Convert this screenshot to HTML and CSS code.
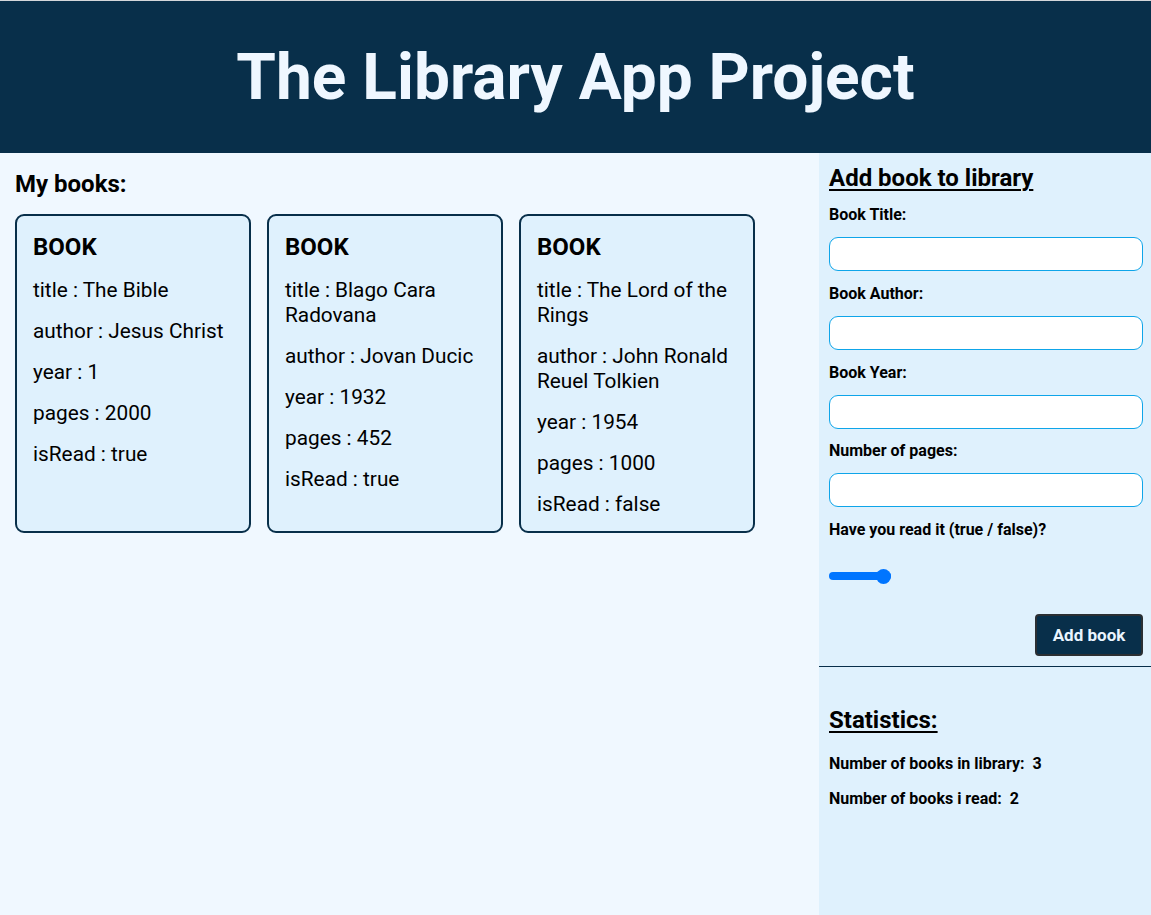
FILE: index.html
```html
<!DOCTYPE html>
<html lang="en">
<head>
<meta charset="utf-8">
<title>The Library App Project</title>
<link rel="stylesheet" href="styles.css">
</head>
<body>
<div class="page">
  <header class="header">
    <h1 class="header-title">The Library App Project</h1>
  </header>
  <div class="content">
    <main class="books">
      <h2 class="books-title">My books:</h2>
      <div class="card-list">
        <div class="card">
          <h3 class="card-title">BOOK</h3>
          <p class="card-row">title : The Bible</p>
          <p class="card-row">author : Jesus Christ</p>
          <p class="card-row">year : 1</p>
          <p class="card-row">pages : 2000</p>
          <p class="card-row">isRead : true</p>
        </div>
        <div class="card">
          <h3 class="card-title">BOOK</h3>
          <p class="card-row">title : Blago Cara Radovana</p>
          <p class="card-row">author : Jovan Ducic</p>
          <p class="card-row">year : 1932</p>
          <p class="card-row">pages : 452</p>
          <p class="card-row">isRead : true</p>
        </div>
        <div class="card">
          <h3 class="card-title">BOOK</h3>
          <p class="card-row">title : The Lord of the Rings</p>
          <p class="card-row">author : John Ronald Reuel Tolkien</p>
          <p class="card-row">year : 1954</p>
          <p class="card-row">pages : 1000</p>
          <p class="card-row">isRead : false</p>
        </div>
      </div>
    </main>
    <aside class="sidebar">
      <form class="add-form">
        <h2 class="side-title">Add book to library</h2>
        <label class="field-label" for="t">Book Title:</label>
        <input class="field-input" id="t" type="text">
        <label class="field-label" for="a">Book Author:</label>
        <input class="field-input" id="a" type="text">
        <label class="field-label" for="y">Book Year:</label>
        <input class="field-input" id="y" type="text">
        <label class="field-label" for="p">Number of pages:</label>
        <input class="field-input" id="p" type="text">
        <label class="field-label" for="r">Have you read it (true / false)?</label>
        <input class="field-range" id="r" type="range" min="0" max="1" value="1">
        <div class="form-actions">
          <button class="add-btn" type="button">Add book</button>
        </div>
      </form>
      <hr class="divider">
      <section class="stats">
        <h2 class="side-title">Statistics:</h2>
        <p class="stat-row">Number of books in library:&nbsp; 3</p>
        <p class="stat-row">Number of books i read:&nbsp; 2</p>
      </section>
    </aside>
  </div>
</div>
</body>
</html>
```
FILE: styles.css
```css
* { box-sizing: border-box; }

html, body {
  margin: 0;
  height: 100%;
}

body {
  font-family: Roboto, "Liberation Sans", sans-serif;
  color: #000;
  background: #f0f8ff;
}

.page {
  display: flex;
  flex-direction: column;
  min-height: 100vh;
  border-top: 1px solid #d4d7da;
}

.header {
  background: #082f4a;
  height: 152px;
  display: flex;
  align-items: center;
  justify-content: center;
}

.header-title {
  margin: 0;
  color: #eff7ff;
  font-size: 64px;
  font-weight: 700;
  line-height: 1;
  padding-top: 2px;
}

.content {
  flex: 1;
  display: flex;
}

.books {
  flex: 1;
  padding: 17px 15px 0 15px;
}

.books-title {
  margin: 0 0 16px 0;
  font-size: 24px;
  font-weight: 700;
  line-height: 28px;
}

.card-list {
  display: flex;
  gap: 16px;
  align-items: stretch;
}

.card {
  width: 236px;
  background: #dff1fd;
  border: 2px solid #082f4a;
  border-radius: 9px;
  padding: 17px 16px 0 16px;
}

.card-title {
  margin: 0 0 17px 0;
  font-size: 24px;
  font-weight: 700;
  line-height: 28px;
}

.card-row {
  margin: 0 0 16px 0;
  font-size: 20.8px;
  line-height: 25px;
}

.card-row:last-child {
  margin-bottom: 14px;
}

.sidebar {
  width: 332px;
  background: #dff1fd;
  display: flex;
  flex-direction: column;
}

.add-form {
  display: flex;
  flex-direction: column;
  align-items: flex-start;
  padding: 11px 8px 10px 10px;
}

.side-title {
  margin: 0;
  font-size: 24px;
  font-weight: 700;
  line-height: 28px;
  text-decoration: underline;
  text-underline-offset: 3px;
  text-decoration-thickness: 2px;
}

.add-form .side-title {
  margin-bottom: 14px;
}

.field-label {
  font-size: 16px;
  font-weight: 700;
  line-height: 18px;
  margin-bottom: 13px;
}

.field-input {
  width: 100%;
  height: 34px;
  border: 1px solid #0ea5e9;
  border-radius: 9px;
  background: #fff;
  margin: 0 0 13.75px 0;
  font: inherit;
}

.field-range {
  -webkit-appearance: none;
  appearance: none;
  width: 62px;
  height: 8px;
  margin: 20px 0 0 0;
  background: #0075ff;
  border-radius: 4px;
}

.field-range::-webkit-slider-thumb {
  -webkit-appearance: none;
  appearance: none;
  width: 15px;
  height: 15px;
  border-radius: 50%;
  background: #0075ff;
}

.form-actions {
  align-self: stretch;
  display: flex;
  justify-content: flex-end;
  margin-top: 34px;
}

.add-btn {
  width: 108px;
  height: 42px;
  background: #082f4a;
  color: #eaf5ff;
  border: 2px solid #2b2f33;
  border-radius: 4px;
  font-family: Roboto, "Liberation Sans", sans-serif;
  font-size: 17px;
  font-weight: 700;
}

.divider {
  margin: 0;
  border: 0;
  border-top: 1px solid #082f4a;
}

.stats {
  padding: 39px 10px 0 10px;
}

.stats .side-title {
  margin-bottom: 21px;
}

.stat-row {
  margin: 0 0 17px 0;
  font-size: 16px;
  font-weight: 700;
  line-height: 18px;
}
```
